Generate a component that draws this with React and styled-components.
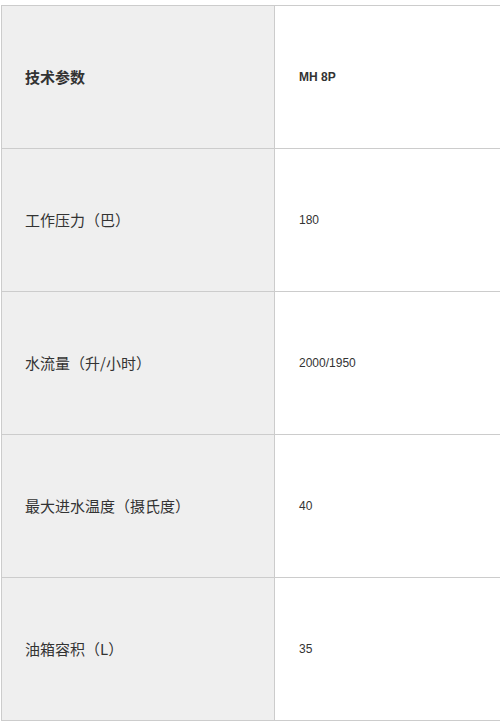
import React from 'react'
import styled, { createGlobalStyle } from 'styled-components'

const GlobalStyle = createGlobalStyle`
  html, body {
    margin: 0;
    padding: 0;
    background: #fff;
    overflow: hidden;
  }
`

const Wrapper = styled.div`
  padding: 5px 0 0 1px;
  width: 499px;
  overflow: hidden;
`

const Table = styled.table`
  border-collapse: collapse;
  width: 640px;
  table-layout: fixed;
  color: #333;
`

const Row = styled.tr`
  height: 143px;
`

const Label = styled.td`
  width: 249px;
  padding: 0 0 2px 23px;
  background: #efefef;
  border: 1px solid #ccc;
  font-family: "Noto Sans CJK SC", "Liberation Sans", sans-serif;
  font-size: 15px;
  font-weight: ${p => (p.$head ? 700 : 400)};
  vertical-align: middle;
`

const Value = styled.td`
  padding: 0 0 0 24px;
  border: 1px solid #ccc;
  font-family: "Liberation Sans", Arial, sans-serif;
  font-size: 12px;
  font-weight: ${p => (p.$head ? 700 : 400)};
  vertical-align: middle;
`

const rows = [
  ['技术参数', 'MH 8P', true],
  ['工作压力（巴）', '180'],
  ['水流量（升/小时）', '2000/1950'],
  ['最大进水温度（摄氏度）', '40'],
  ['油箱容积（L）', '35'],
]

export default function App() {
  return (
    <>
      <GlobalStyle />
      <Wrapper>
        <Table>
          <tbody>
            {rows.map(([label, value, head]) => (
              <Row key={label}>
                <Label $head={head}>{label}</Label>
                <Value $head={head}>{value}</Value>
              </Row>
            ))}
          </tbody>
        </Table>
      </Wrapper>
    </>
  )
}
